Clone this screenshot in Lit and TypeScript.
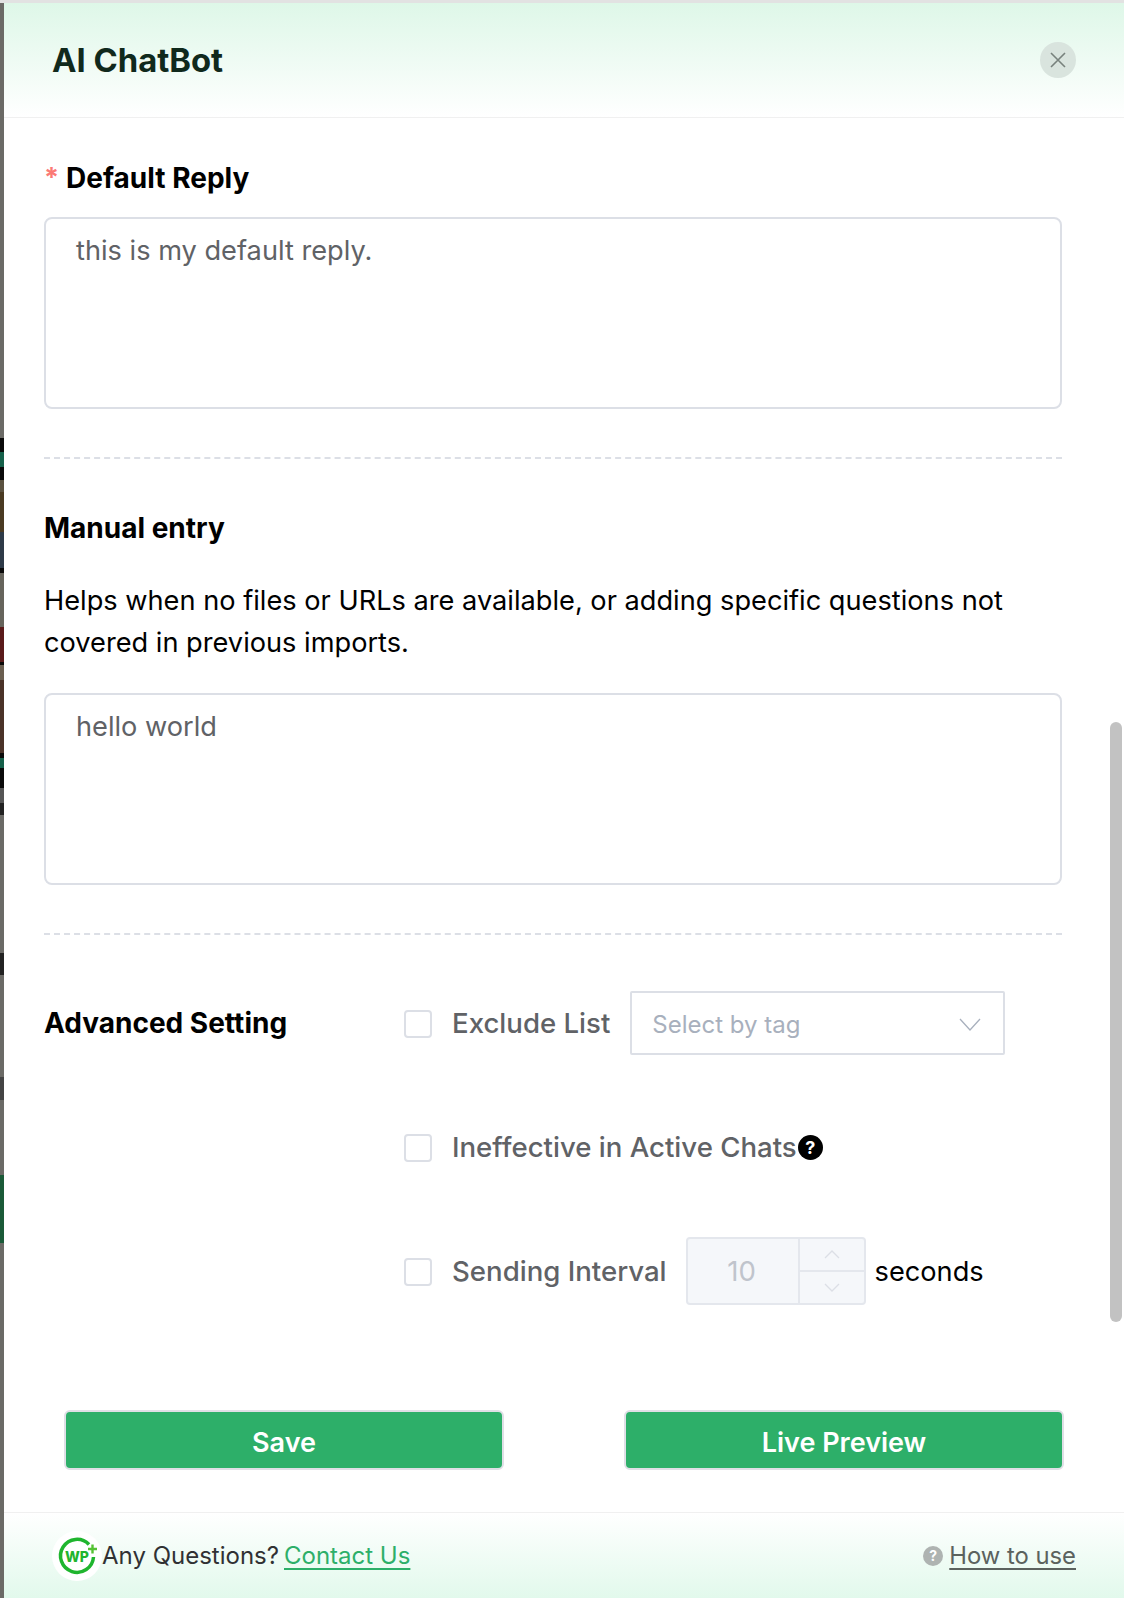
import { LitElement, css, html } from "lit";
import { customElement } from "lit/decorators.js";

@customElement("app-root")
export class AppRoot extends LitElement {
    static styles = css`
    :host {
        display: block;
        height: 1598px;
        font-family: Inter, "Liberation Sans", sans-serif;
        color: #000;
        overflow: hidden;
    }

    .page {
        height: 100%;
        display: flex;
        flex-direction: column;
    }

    .top-edge {
        height: 3px;
        background: #e2e2e2;
        flex: none;
    }

    .frame {
        flex: 1;
        min-height: 0;
        display: flex;
    }

    .backdrop {
        width: 4px;
        flex: none;
        background: linear-gradient(to bottom,
            #6b6a66 0, #6b6a66 435px,
            #0a0a0a 435px, #0a0a0a 449px,
            #15604a 449px, #15604a 464px,
            #0a0a0a 464px, #0a0a0a 477px,
            #5a5140 477px, #5a5140 489px,
            #4a3a22 489px, #4a3a22 529px,
            #2e3a48 529px, #2e3a48 565px,
            #0a0a0a 565px, #0a0a0a 570px,
            #66645c 570px, #66645c 624px,
            #5a1a1a 624px, #5a1a1a 659px,
            #0a0a0a 659px, #0a0a0a 662px,
            #6a5e50 662px, #6a5e50 677px,
            #4a3228 677px, #4a3228 750px,
            #0a0a0a 750px, #0a0a0a 755px,
            #15604a 755px, #15604a 765px,
            #0a0a0a 765px, #0a0a0a 785px,
            #555 785px, #555 800px,
            #222 800px, #222 812px,
            #6b6a66 812px, #6b6a66 950px,
            #222 950px, #222 972px,
            #6b6a66 972px, #6b6a66 1074px,
            #444 1074px, #444 1097px,
            #6b6a66 1097px, #6b6a66 1172px,
            #1a5a38 1172px, #1a5a38 1240px,
            #6b6a66 1240px, #6b6a66 100%);
    }

    .panel {
        flex: 1;
        min-width: 0;
        display: flex;
        flex-direction: column;
        background: #fff;
    }

    .header {
        height: 114px;
        flex: none;
        box-sizing: border-box;
        display: flex;
        align-items: center;
        justify-content: space-between;
        padding: 0 48px 0 48px;
        background: linear-gradient(to bottom, #def7e8, #fff);
    }

    .title {
        font-size: 32.8px;
        font-weight: 700;
        color: #10291c;
    }

    .close {
        width: 36px;
        height: 36px;
        border-radius: 50%;
        background: #d9e4de;
        display: flex;
        align-items: center;
        justify-content: center;
    }

    .body {
        flex: 1;
        min-height: 0;
        border-top: 1px solid #f0f0f0;
        border-bottom: 1px solid #f0f0f0;
        display: flex;
        flex-direction: column;
        position: relative;
        padding: 43px 62px 0 40px;
        font-size: 27.2px;
    }

    .scrollbar {
        position: absolute;
        right: 2px;
        top: 604px;
        width: 12px;
        height: 600px;
        border-radius: 6px;
        background: #c2c2c2;
    }

    .label {
        font-weight: 700;
        font-size: 28px;
        line-height: 34px;
    }

    .required {
        display: flex;
        align-items: flex-start;
        gap: 7px;
        margin-bottom: 22px;
    }

    .star {
        color: #fb7a75;
        font-weight: 700;
        font-size: 27px;
        line-height: 34px;
    }

    .textarea {
        height: 192px;
        box-sizing: border-box;
        border: 2px solid #dcdfe6;
        border-radius: 8px;
        padding: 14px 30px;
        color: #606266;
        line-height: 36px;
    }

    .divider {
        border-top: 2px dashed #dcdfe6;
        margin: 48px 0 52px;
    }

    .hint {
        line-height: 42px;
        margin: 35px 0 29px;
    }

    .advanced {
        display: flex;
        margin-top: 1px;
    }

    .advanced .label {
        width: 360px;
        flex: none;
        line-height: 36px;
        padding-top: 17px;
    }

    .options {
        flex: 1;
        display: flex;
        flex-direction: column;
        gap: 54px;
    }

    .option {
        display: flex;
        align-items: center;
        height: 70px;
        color: #606266;
        white-space: nowrap;
        font-size: 27.6px;
        font-weight: 500;
    }

    .checkbox {
        width: 28px;
        height: 28px;
        box-sizing: border-box;
        border: 2px solid #dcdfe6;
        border-radius: 4px;
        margin: 2px 20px 0 0;
        flex: none;
    }

    .select {
        width: 375px;
        height: 64px;
        box-sizing: border-box;
        border: 2px solid #dcdfe6;
        border-radius: 2px;
        margin-left: 20px;
        padding: 2px 22px 0 20px;
        display: flex;
        align-items: center;
        justify-content: space-between;
        color: #a8b0bd;
        font-size: 24px;
        font-weight: 400;
    }

    .help {
        width: 25px;
        height: 25px;
        margin-left: 1px;
        border-radius: 50%;
        background: #000;
        color: #fff;
        font-size: 18px;
        font-weight: 700;
        display: flex;
        align-items: center;
        justify-content: center;
    }

    .stepper {
        width: 180px;
        height: 68px;
        box-sizing: border-box;
        border: 2px solid #e4e7ed;
        border-radius: 4px;
        background: #f5f7fa;
        margin: 0 9px 0 19px;
        display: flex;
    }

    .stepper .value {
        flex: 1;
        padding-right: 2px;
        text-align: center;
        line-height: 64px;
        color: #c0c4cc;
        font-weight: 400;
    }

    .arrows {
        width: 64px;
        border-left: 2px solid #e4e7ed;
        display: flex;
        flex-direction: column;
    }

    .arrows span {
        flex: 1;
        display: flex;
        align-items: center;
        justify-content: center;
    }

    .arrows span + span {
        border-top: 2px solid #e4e7ed;
    }

    .unit {
        color: #000;
        font-weight: 400;
        font-size: 27.2px;
    }

    .actions {
        display: flex;
        justify-content: space-between;
        padding: 0 0 0 20px;
        margin: 104px -2px 0 0;
    }

    .btn {
        width: 440px;
        height: 60px;
        box-sizing: border-box;
        border: 2px solid #dfdfe6;
        border-radius: 6px;
        padding-top: 4px;
        background: #2daf69;
        color: #fff;
        font-weight: 600;
        font-size: 27px;
        display: flex;
        align-items: center;
        justify-content: center;
    }

    .footer {
        height: 85px;
        flex: none;
        box-sizing: border-box;
        display: flex;
        align-items: center;
        justify-content: space-between;
        padding: 0 48px;
        background: linear-gradient(to bottom, #fff, #e2f9ec);
        font-size: 24px;
        color: #303133;
    }

    .contact, .howto {
        display: flex;
        align-items: center;
    }

    .logo {
        width: 50px;
        height: 50px;
    }

    .contact a {
        color: #2daf69;
        margin-left: 5px;
        text-underline-offset: 4px;
    }

    .howto {
        color: #5b625e;
        gap: 6px;
        font-size: 23.8px;
    }

    .howto a {
        color: inherit;
        text-underline-offset: 4px;
    }

    .q {
        width: 20px;
        height: 20px;
        border-radius: 50%;
        background: #aeb3b1;
        color: #fff;
        font-size: 14px;
        font-weight: 700;
        display: flex;
        align-items: center;
        justify-content: center;
    }
    `;

    render() {
        const chevron = (d: string, color: string, w: number, h: number) => html`
            <svg width=${w} height=${h} viewBox="0 0 ${w} ${h}" fill="none" stroke=${color} stroke-width="1.3"><path d=${d}/></svg>`;
        return html`
        <div class="page">
            <div class="top-edge"></div>
            <div class="frame">
                <div class="backdrop"></div>
                <div class="panel">
                    <div class="header">
                        <div class="title">AI ChatBot</div>
                        <div class="close">
                            <svg width="16" height="16" viewBox="0 0 16 16" fill="none" stroke="#78827d" stroke-width="1.6"><path d="M1 1 15 15M15 1 1 15"/></svg>
                        </div>
                    </div>
                    <div class="body">
                        <div class="label required"><span class="star">*</span>Default Reply</div>
                        <div class="textarea">this is my default reply.</div>
                        <div class="divider"></div>
                        <div class="label">Manual entry</div>
                        <div class="hint">Helps when no files or URLs are available, or adding specific questions not covered in previous imports.</div>
                        <div class="textarea">hello world</div>
                        <div class="divider"></div>
                        <div class="advanced">
                            <div class="label">Advanced Setting</div>
                            <div class="options">
                                <div class="option">
                                    <span class="checkbox"></span>Exclude List
                                    <div class="select">Select by tag ${chevron("M1 1 11 12 21 1", "#a8b0bd", 22, 13)}</div>
                                </div>
                                <div class="option">
                                    <span class="checkbox"></span>Ineffective in Active Chats<span class="help">?</span>
                                </div>
                                <div class="option">
                                    <span class="checkbox"></span>Sending Interval
                                    <div class="stepper">
                                        <div class="value">10</div>
                                        <div class="arrows">
                                            <span>${chevron("M1 8 8 1 15 8", "#dcdfe6", 16, 9)}</span>
                                            <span>${chevron("M1 1 8 8 15 1", "#dcdfe6", 16, 9)}</span>
                                        </div>
                                    </div>
                                    <span class="unit">seconds</span>
                                </div>
                            </div>
                        </div>
                        <div class="actions">
                            <div class="btn">Save</div>
                            <div class="btn">Live Preview</div>
                        </div>
                        <div class="scrollbar"></div>
                    </div>
                    <div class="footer">
                        <div class="contact">
                            <svg class="logo" viewBox="0 0 50 50">
                                <circle cx="25" cy="25" r="25" fill="#fff"/>
                                <path d="M37 13.5A16.5 16.5 0 1 0 41.5 26" fill="none" stroke="#1fb52e" stroke-width="3.5"/>
                                <path d="M36 18h9M40.5 13.5v9" stroke="#55c234" stroke-width="2.4"/>
                                <text x="25" y="31" text-anchor="middle" font-size="14" font-weight="800" fill="#1fb52e">WP</text>
                            </svg>
                            Any Questions? <a href="#">Contact Us</a>
                        </div>
                        <div class="howto"><span class="q">?</span><a href="#">How to use</a></div>
                    </div>
                </div>
            </div>
        </div>
        `;
    }
}

declare global {
    interface HTMLElementTagNameMap {
        "app-root": AppRoot
    }
}
